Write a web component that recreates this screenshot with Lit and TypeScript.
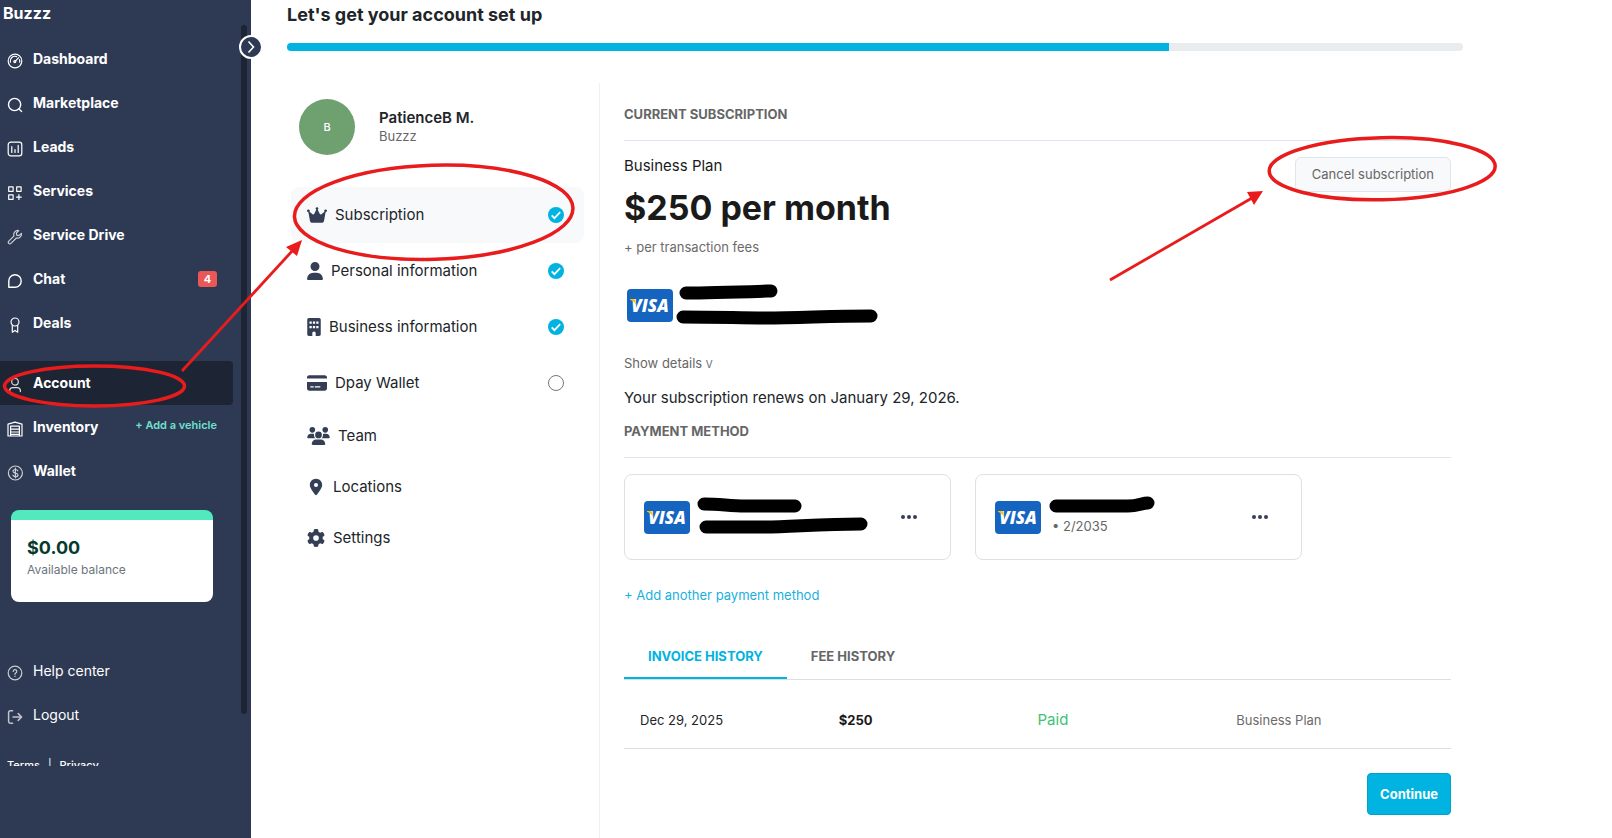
import { LitElement, html, css, svg, nothing, TemplateResult } from "lit";
import { customElement, property } from "lit/decorators.js";
import { classMap } from "lit/directives/class-map.js";

const line = (body: TemplateResult, opacity = 1) => html`<svg width="16" height="16" viewBox="0 0 16 16" fill="none"
  stroke="#fff" stroke-opacity=${opacity} stroke-width="1.2" stroke-linecap="round" stroke-linejoin="round" aria-hidden="true">${body}</svg>`;

const navIcons: Record<string, TemplateResult> = {
  dashboard: line(svg`<circle cx="8" cy="8" r="6.8"/><path d="M3.4 9.2A4.7 4.7 0 0 1 9.6 3.6M12.5 6.6A4.7 4.7 0 0 1 12.6 9.2M8.2 8.3 11.6 4.6"/><circle cx="7.8" cy="8.6" r="1"/>`),
  marketplace: line(svg`<circle cx="7.6" cy="7.5" r="6.1" stroke-width="1.4"/><path d="m12 12 2.6 2.4" stroke-width="1.4"/>`),
  leads: line(svg`<rect x="1.2" y="1.2" width="13.6" height="13.6" rx="2.6"/><path d="M4.8 5.5v6M8 8.6v2.9M11.2 4.4v7.1"/>`),
  services: line(svg`<rect x="1.7" y="1.9" width="4.4" height="4.4"/><rect x="9.7" y="1.9" width="4.4" height="4.4"/><rect x="1.7" y="9.9" width="4.4" height="4.4"/><path d="M11.9 9.7v4.8M9.5 12.1h4.8"/>`),
  drive: line(svg`<path d="M14.4 4.4 11.9 6.6 9.7 6.2 9.4 4 11.7 1.6A4 4 0 0 0 7 6.9L1.8 12.2a1.5 1.5 0 0 0 2.1 2.2L9.4 9A4 4 0 0 0 14.4 4.4Z"/>`, 0.75),
  chat: line(svg`<path d="M1.8 14.2V8A6.2 6.2 0 1 1 8 14.2Z" stroke-width="1.4"/>`),
  deals: line(svg`<circle cx="8" cy="5" r="4"/><path d="M5.3 8.4v6.8L8 13.4l2.7 1.8V8.4"/>`),
  account: line(svg`<circle cx="8" cy="4.8" r="3.3"/><path d="M2.6 14.6v-1A3.2 3.2 0 0 1 5.8 10.6h4.4a3.2 3.2 0 0 1 3.2 3v1"/>`, 0.85),
  inventory: line(svg`<path d="M1 15V3.2L8 1.2l7 2V15ZM3.6 15V5.2h8.8V15M3.6 8.2h8.8M3.6 11h8.8M3.6 13.4h8.8"/>`),
  wallet: line(svg`<circle cx="8.4" cy="8" r="7"/><path d="M10.8 5.8C10.4 4.8 9.4 4.5 8.4 4.5c-1.3 0-2.4.6-2.4 1.7 0 2.5 5 1.2 5 3.7 0 1.1-1.1 1.7-2.5 1.7-1.3 0-2.3-.5-2.6-1.5M8.4 3.2v9.6"/>`, 0.75),
  help: line(svg`<circle cx="8" cy="8" r="6.8"/><path d="M6.2 6.4A1.8 1.8 0 1 1 8.6 8.1C8.1 8.300 8 8.600 8 9.300M8 11.200v.2"/>`, 0.75),
  logout: line(svg`<path d="M5.600 1.800H3.200A1.600 1.600 0 0 0 1.600 3.400v9.200a1.600 1.600 0 0 0 1.600 1.600h2.400M6 8h8.600M11.200 4.600 14.600 8l-3.400 3.400" stroke-width="1.500"/>`, 0.7),
};

const solid = (w: number, box: string, body: TemplateResult) =>
  html`<svg width=${w} height="18" viewBox=${box} fill="#343f55" aria-hidden="true">${body}</svg>`;

const menuIcons: Record<string, TemplateResult> = {
  crown: solid(20, "0 0 576 512", svg`<path d="M309 106c11.400-7 19-19.700 19-34 0-22.100-17.900-40-40-40s-40 17.900-40 40c0 14.400 7.600 27 19 34L209.700 220.600c-9.100 18.200-32.700 23.400-48.600 10.700L72 160c5-6.700 8-15 8-24 0-22.100-17.900-40-40-40S0 113.900 0 136s17.900 40 40 40c.2 0 .5 0 .7 0L86.400 427.400c5.500 30.400 32 52.600 63 52.600h277.200c30.900 0 57.400-22.100 63-52.600L535.300 176c.2 0 .5 0 .7 0 22.100 0 40-17.900 40-40s-17.900-40-40-40-40 17.900-40 40c0 9 3 17.300 8 24l-89.100 71.300c-15.900 12.700-39.500 7.500-48.600-10.700L309 106z"/>`),
  user: solid(16, "0 0 448 512", svg`<path d="M224 256A128 128 0 1 0 224 0a128 128 0 1 0 0 256zm-45.700 48C79.800 304 0 383.800 0 482.300 0 498.700 13.300 512 29.700 512h388.600c16.400 0 29.700-13.300 29.700-29.700C448 383.800 368.200 304 269.700 304z"/>`),
  building: solid(14, "0 0 384 512", svg`<path fill-rule="evenodd" d="M48 0C21.500 0 0 21.500 0 48v416c0 26.500 21.500 48 48 48h96v-80c0-26.500 21.500-48 48-48s48 21.500 48 48v80h96c26.500 0 48-21.500 48-48V48c0-26.500-21.500-48-48-48zM64 96h64v64H64zm96 0h64v64h-64zm96 0h64v64h-64zM64 224h64v64H64zm96 0h64v64h-64zm96 0h64v64h-64z"/>`),
  card: solid(20, "0 0 576 512", svg`<path fill-rule="evenodd" d="M64 32C28.700 32 0 60.700 0 96v32h576V96c0-35.300-28.700-64-64-64zM576 224H0v192c0 35.300 28.700 64 64 64h448c35.300 0 64-28.700 64-64zM96 352h96v32H96zm128 0h160v32H224z"/>`),
  team: solid(23, "0 0 640 512", svg`<path d="M144 0a80 80 0 1 1 0 160A80 80 0 1 1 144 0zM512 0a80 80 0 1 1 0 160A80 80 0 1 1 512 0zM0 298.700C0 239.800 47.800 192 106.700 192h42.700c15.900 0 31 3.500 44.600 9.700-1.300 7.200-1.900 14.700-1.900 22.300 0 38.200 16.800 72.500 43.300 96H21.300C9.600 320 0 310.400 0 298.700zM405.300 320c26.600-23.500 43.300-57.800 43.300-96 0-7.600-.7-15-1.900-22.300 13.600-6.300 28.700-9.700 44.600-9.700h42.700C592.200 192 640 239.800 640 298.700c0 11.800-9.600 21.300-21.300 21.300zM224 224a96 96 0 1 1 192 0 96 96 0 1 1-192 0zM128 485.300C128 411.700 187.700 352 261.300 352h117.400C452.300 352 512 411.700 512 485.300c0 14.700-11.900 26.700-26.700 26.700H154.700c-14.700 0-26.700-11.900-26.700-26.700z"/>`),
  pin: solid(18, "-64 -24 512 560", svg`<path fill-rule="evenodd" d="M215.700 499.200C267 435 384 279.400 384 192 384 86 298 0 192 0S0 86 0 192c0 87.400 117 243 168.300 307.200 12.300 15.300 35.100 15.300 47.400 0zM192 128a64 64 0 1 1 0 128 64 64 0 1 1 0-128z"/>`),
  gear: solid(18, "0 0 512 512", svg`<path fill-rule="evenodd" d="M495.900 166.600c3.200 8.700.5 18.400-6.400 24.600l-43.300 39.400c1.100 8.300 1.700 16.800 1.700 25.400s-.6 17.100-1.700 25.400l43.300 39.400c6.900 6.200 9.600 15.900 6.400 24.600-4.400 11.900-9.700 23.300-15.800 34.300l-4.700 8.100c-6.600 11-14 21.400-22.100 31.200-5.900 7.200-15.700 9.600-24.500 6.800l-55.700-17.700c-13.400 10.300-28.200 18.900-44 25.400l-12.500 57.100c-2 9.100-9 16.300-18.200 17.800-13.800 2.300-28 3.500-42.500 3.500s-28.700-1.200-42.500-3.500c-9.200-1.500-16.200-8.700-18.200-17.800l-12.500-57.100c-15.800-6.500-30.600-15.100-44-25.400l-55.600 17.800c-8.800 2.800-18.600.3-24.500-6.800-8.100-9.800-15.500-20.200-22.100-31.200l-4.700-8.100c-6.100-11-11.400-22.400-15.800-34.300-3.200-8.700-.5-18.400 6.400-24.600l43.300-39.400C64.600 273.100 64 264.600 64 256s.6-17.100 1.700-25.400l-43.300-39.400c-6.900-6.200-9.600-15.900-6.400-24.600 4.400-11.900 9.700-23.300 15.800-34.300l4.700-8.100c6.600-11 14-21.400 22.100-31.200 5.900-7.200 15.700-9.600 24.500-6.800l55.700 17.700c13.400-10.300 28.200-18.900 44-25.400l12.500-57.100c2-9.100 9-16.300 18.200-17.800C227.300 1.200 241.500 0 256 0s28.700 1.200 42.500 3.500c9.200 1.500 16.200 8.700 18.200 17.800l12.500 57.100c15.800 6.500 30.600 15.100 44 25.400l55.700-17.700c8.800-2.800 18.600-.3 24.500 6.800 8.100 9.800 15.500 20.200 22.100 31.200l4.700 8.100c6.100 11 11.400 22.400 15.700 34.300zM256 336a80 80 0 1 0 0-160 80 80 0 1 0 0 160z"/>`),
};

const checkIcon = html`<svg width="16" height="16" viewBox="0 0 16 16" role="img" aria-label="Complete"><circle cx="8" cy="8" r="8" fill="#00b3e0"/><path d="m3.700 8.400 2.700 2.700 5.800-6" fill="none" stroke="#fff" stroke-width="1.800"/></svg>`;
const openIcon = html`<svg width="16" height="16" viewBox="0 0 16 16" role="img" aria-label="Incomplete"><circle cx="8" cy="8" r="7.500" fill="#fff" stroke="#777"/></svg>`;

@customElement("visa-badge")
export class VisaBadge extends LitElement {
  static styles = css`
    :host { display: inline-flex; align-items: center; justify-content: center; width: 46px; height: 33px; border-radius: 4px; background: #1565c0; color: #fff; font: italic 800 17px/33px "Open Sans", sans-serif; position: relative; }
    .flare { position: absolute; left: 3px; top: 10px; }
  `;
  render() {
    return html`VISA<svg class="flare" width="7" height="7" viewBox="0 0 8 8" aria-hidden="true"><path d="M0 0h4q1.500 0 2 1.600L7 6Q4.500 2 0 .8Z" fill="#ffc107"/></svg>`;
  }
}

@customElement("nav-row")
export class NavRow extends LitElement {
  @property() icon = "";
  @property() label = "";
  @property({ type: Number }) count = 0;
  @property() action = "";
  @property({ type: Boolean }) active = false;
  @property({ type: Boolean }) light = false;
  static styles = css`
    :host { display: block; }
    .row { display: flex; align-items: center; height: 44px; padding: 0 16px 0 7px; margin-right: 8px; border-radius: 0 4px 4px 0; }
    .active { background: #1d2433; }
    a { color: #fff; text-decoration: none; }
    .main { display: flex; align-items: center; gap: 10px; flex: 1; font-size: 14px; line-height: 20px; font-weight: 700; }
    .main svg { position: relative; top: 2px; }
    .light { font-weight: 400; }
    .badge { width: 19px; height: 16px; border-radius: 3px; background: #eb5757; color: #fff; font-size: 11px; line-height: 16px; font-weight: 700; text-align: center; }
    .action { color: #6ee0cf; font-size: 11px; line-height: 20px; font-weight: 600; margin-bottom: 4px; }
  `;
  render() {
    return html`<div class=${classMap({ row: true, active: this.active })}>
      <a href="#" class=${classMap({ main: true, light: this.light })}>${navIcons[this.icon]}<span>${this.label}</span></a>
      ${this.count ? html`<span class="badge">${this.count}</span>` : nothing}
      ${this.action ? html`<a href="#" class="action">${this.action}</a>` : nothing}
    </div>`;
  }
}

@customElement("app-root")
export class AppRoot extends LitElement {
  static styles = css`
    :host { display: flex; position: relative; min-height: 100vh; overflow: hidden; background: #fff; color: #212529; font-family: Inter, sans-serif; font-size: 15px; line-height: 24px; }
    * { box-sizing: border-box; }
    h1, h2, p { margin: 0; }
    a { text-decoration: none; }
    button { font-family: inherit; cursor: pointer; }
    .sidebar { position: relative; flex: 0 0 251px; background: #2e3a54; color: #fff; }
    .brand { height: 37px; padding: 1px 0 0 3px; font-size: 16px; line-height: 24px; font-weight: 700; }
    .scroll { height: 729px; overflow: hidden; padding-right: 10px; }
    .group { padding-top: 16px; }
    .thumb { position: absolute; left: 241px; top: 25px; width: 6px; height: 689px; border-radius: 3px; background: #1d2433; }
    .toggle { position: absolute; left: 239px; top: 35px; width: 24px; height: 24px; padding: 0; border: 2px solid #fff; border-radius: 50%; background: #2e3a54; display: flex; align-items: center; justify-content: center; }
    .balance { width: 202px; height: 92px; margin: 17px 0 47px 11px; padding: 16px; border-top: 10px solid #52e9bd; border-radius: 8px; background: #fff; }
    .amount { color: #06392b; font-size: 18px; line-height: 24px; font-weight: 700; }
    .caption { color: #6c757d; font-size: 12px; line-height: 20px; }
    .legal { display: flex; gap: 8px; padding: 18px 7px; font-size: 11px; line-height: 20px; }
    .legal a { color: #fff; font-weight: 500; }

    .page { flex: 1; min-width: 0; padding: 0 36px; }
    .inner { max-width: 1176px; display: flex; flex-direction: column; min-height: 100vh; }
    h1 { font-size: 18px; line-height: 24px; font-weight: 700; padding: 3px 0 16px; }
    .bar { height: 8px; border-radius: 4px; background: #e9ecef; overflow: hidden; }
    .fill { height: 100%; background: #00b3e0; }
    .columns { display: flex; flex: 1; margin-top: 32px; }
    .side { flex: 0 0 313px; border-right: 1px solid #f0f1f4; padding: 16px 15px 0 4px; }
    .profile { display: flex; align-items: center; gap: 24px; padding-left: 8px; margin-bottom: 32px; }
    .avatar { width: 56px; height: 56px; border-radius: 50%; background: #6fa06f; color: #fff; font-size: 11px; line-height: 56px; font-weight: 500; text-align: center; }
    .who { padding-bottom: 2px; }
    .name { font-size: 15px; line-height: 20px; font-weight: 600; }
    .org { color: #666; font-size: 13px; line-height: 16px; }
    .item { display: flex; align-items: center; gap: 8px; height: 56px; padding: 0 20px 1px 16px; border-radius: 8px; color: #212529; }
    .item.on { background: #f8f9fb; }
    .item.short { height: 51px; }
    .item span { flex: 1; }

    .body { flex: 1; min-width: 0; padding: 19px 12px 23px 24px; }
    h2 { color: #666; font-size: 13px; line-height: 24px; font-weight: 700; border-bottom: 1px solid #dfe5ee; padding-bottom: 14px; margin-bottom: 16px; text-transform: uppercase; }
    .plan { display: flex; justify-content: space-between; align-items: flex-start; color: #1a1a1a; }
    .label { line-height: 18px; }
    .price { font-size: 34px; line-height: 44px; font-weight: 700; padding: 11px 0 7px; }
    .fees { color: #6b6b6b; font-size: 13px; line-height: 20px; }
    .cancel { height: 35px; padding: 0 16px 2px; border: 1px solid #dfe5ee; border-radius: 6px; background: #f8f9fb; color: #666; font-size: 13px; line-height: 20px; }
    .source { display: flex; padding: 32px 3px 31px; }
    .details { display: block; border: 0; padding: 0; background: none; color: #666; font-size: 13px; line-height: 20px; }
    .details small { font-size: 10px; }
    .renew { padding: 12px 0 9px; }
    .cards { display: flex; gap: 24px; }
    .card { flex: 0 1 327px; height: 86px; display: flex; align-items: center; gap: 11px; padding: 0 33px 0 19px; border: 1px solid #e0e0e0; border-radius: 8px; }
    .expiry { flex: 1; color: #666; font-size: 13px; line-height: 20px; padding-top: 18px; }
    .more { display: flex; border: 0; padding: 0; background: none; }
    .add { display: inline-block; margin-top: 25px; color: #1ab0dc; font-size: 13px; line-height: 20px; }
    .tabs { display: flex; margin-top: 27px; border-bottom: 1px solid #dedede; }
    .tab { height: 45px; padding: 0 24px; border: 0; border-bottom: 2px solid transparent; background: none; color: #666; font-size: 13px; line-height: 20px; font-weight: 700; }
    .tab.on { color: #00b3e0; border-color: #00b3e0; }
    .invoices { width: 100%; border-collapse: collapse; table-layout: fixed; font-size: 13px; line-height: 20px; }
    .wrap { padding: 0 16px; border-bottom: 1px solid #dedede; }
    .invoices td { height: 68px; padding: 12px 0 0; }
    .invoices strong { color: #1a1a1a; }
    .invoices .paid { color: #3cc373; font-size: 15px; }
    .muted { color: #6b6b6b; }
    .foot { display: flex; justify-content: flex-end; padding-top: 24px; }
    .go { height: 42px; padding: 0 12px; border: 1px solid #00a2cc; border-radius: 4px; background: #00b3e0; color: #fff; font-size: 13px; line-height: 20px; font-weight: 700; }
    .marks { position: absolute; left: 0; top: 0; pointer-events: none; }
  `;

  private nav = [
    ["dashboard", "Dashboard"], ["marketplace", "Marketplace"], ["leads", "Leads"], ["services", "Services"],
    ["drive", "Service Drive"], ["chat", "Chat"], ["deals", "Deals"],
  ];

  private menu: { icon: string; label: string; done?: boolean; on?: boolean }[] = [
    { icon: "crown", label: "Subscription", done: true, on: true },
    { icon: "user", label: "Personal information", done: true },
    { icon: "building", label: "Business information", done: true },
    { icon: "card", label: "Dpay Wallet", done: false },
    { icon: "team", label: "Team" },
    { icon: "pin", label: "Locations" },
    { icon: "gear", label: "Settings" },
  ];

  private dots = html`<svg width="16" height="4" viewBox="0 0 16 4" fill="#343f55" aria-hidden="true"><circle cx="2" cy="2" r="2"/><circle cx="8" cy="2" r="2"/><circle cx="14" cy="2" r="2"/></svg>`;

  private progress = 75;

  render() {
    return html`
      <aside class="sidebar">
        <div class="brand">Buzzz</div>
        <div class="scroll">
          <nav>
            ${this.nav.map(([icon, label]) => html`<nav-row .icon=${icon} .label=${label} .count=${icon === "chat" ? 4 : 0}></nav-row>`)}
            <div class="group">
              <nav-row icon="account" label="Account" active></nav-row>
              <nav-row icon="inventory" label="Inventory" action="+ Add a vehicle"></nav-row>
              <nav-row icon="wallet" label="Wallet"></nav-row>
            </div>
          </nav>
          <div class="balance"><div class="amount">$0.00</div><div class="caption">Available balance</div></div>
          <nav-row icon="help" label="Help center" light></nav-row>
          <nav-row icon="logout" label="Logout" light></nav-row>
          <div class="legal"><a href="#">Terms</a><span>|</span><a href="#">Privacy</a></div>
        </div>
        <div class="thumb"></div>
        <button class="toggle" aria-label="Collapse menu"><svg width="8" height="14" viewBox="0 0 8 14" fill="none" stroke="#fff" stroke-width="1.600"><path d="m1.500 1.500 5 5.500-5 5.500"/></svg></button>
      </aside>
      <main class="page">
        <div class="inner">
          <h1>Let's get your account set up</h1>
          <div class="bar" role="progressbar" aria-valuenow=${this.progress}><div class="fill" style="width:${this.progress}%"></div></div>
          <div class="columns">
            <div class="side">
              <div class="profile"><div class="avatar">B</div><div class="who"><div class="name">PatienceB M.</div><div class="org">Buzzz</div></div></div>
              ${this.menu.map((m) => html`<a href="#" class=${classMap({ item: true, on: !!m.on, short: m.done === undefined })}>
                ${menuIcons[m.icon]}<span>${m.label}</span>${m.done === undefined ? nothing : m.done ? checkIcon : openIcon}</a>`)}
            </div>
            <section class="body">
              <h2>Current subscription</h2>
              <div class="plan">
                <div><p class="label">Business Plan</p><p class="price">$250 per month</p><p class="fees">+ per transaction fees</p></div>
                <button class="cancel">Cancel subscription</button>
              </div>
              <div class="source"><visa-badge></visa-badge></div>
              <button class="details">Show details <small>V</small></button>
              <p class="renew">Your subscription renews on January 29, 2026.</p>
              <h2>Payment method</h2>
              <div class="cards">
                ${["", "• 2/2035"].map((exp) => html`<div class="card"><visa-badge></visa-badge><span class="expiry">${exp}</span>
                  <button class="more" aria-label="Card options">${this.dots}</button></div>`)}
              </div>
              <a href="#" class="add">+ Add another payment method</a>
              <div class="tabs"><button class="tab on">INVOICE HISTORY</button><button class="tab">FEE HISTORY</button></div>
              <div class="wrap"><table class="invoices"><tbody><tr>
                <td>Dec 29, 2025</td><td><strong>$250</strong></td><td class="paid">Paid</td><td class="muted">Business Plan</td>
              </tr></tbody></table></div>
              <div class="foot"><button class="go">Continue</button></div>
            </section>
          </div>
        </div>
      </main>
      <svg class="marks" width="1612" height="838" viewBox="0 0 1612 838" fill="none" aria-hidden="true">
        <g stroke="#000" stroke-width="13" stroke-linecap="round" stroke-linejoin="round">
          <path d="M686 293C710 293 740 292 771 291"/>
          <path d="M683 317C720 317 740 318 765 318 800 318 830 316 871 316"/>
          <path d="M704 504C720 504 730 506 745 506H795"/>
          <path d="M706 527H765C790 527 820 524 861 524"/>
          <path d="M1056 506H1128C1138 506 1142 503 1148 503"/>
        </g>
        <g stroke="#e81c1c" stroke-width="3.500">
          <ellipse cx="94.500" cy="386" rx="90" ry="20"/>
          <ellipse cx="433.700" cy="212.300" rx="139.300" ry="47" transform="rotate(-1.800 433.700 212.300)"/>
          <ellipse cx="1382.200" cy="168.700" rx="113" ry="31" transform="rotate(-1.300 1382.200 168.700)"/>
          <path d="M182 371 294 249" stroke-width="2.800"/>
          <path d="M1110 280 1252 198" stroke-width="2.800"/>
        </g>
        <path d="m302 240-16 7 11 9ZM1263 191l-16 1 7 13Z" fill="#e81c1c"/>
      </svg>
    `;
  }
}
